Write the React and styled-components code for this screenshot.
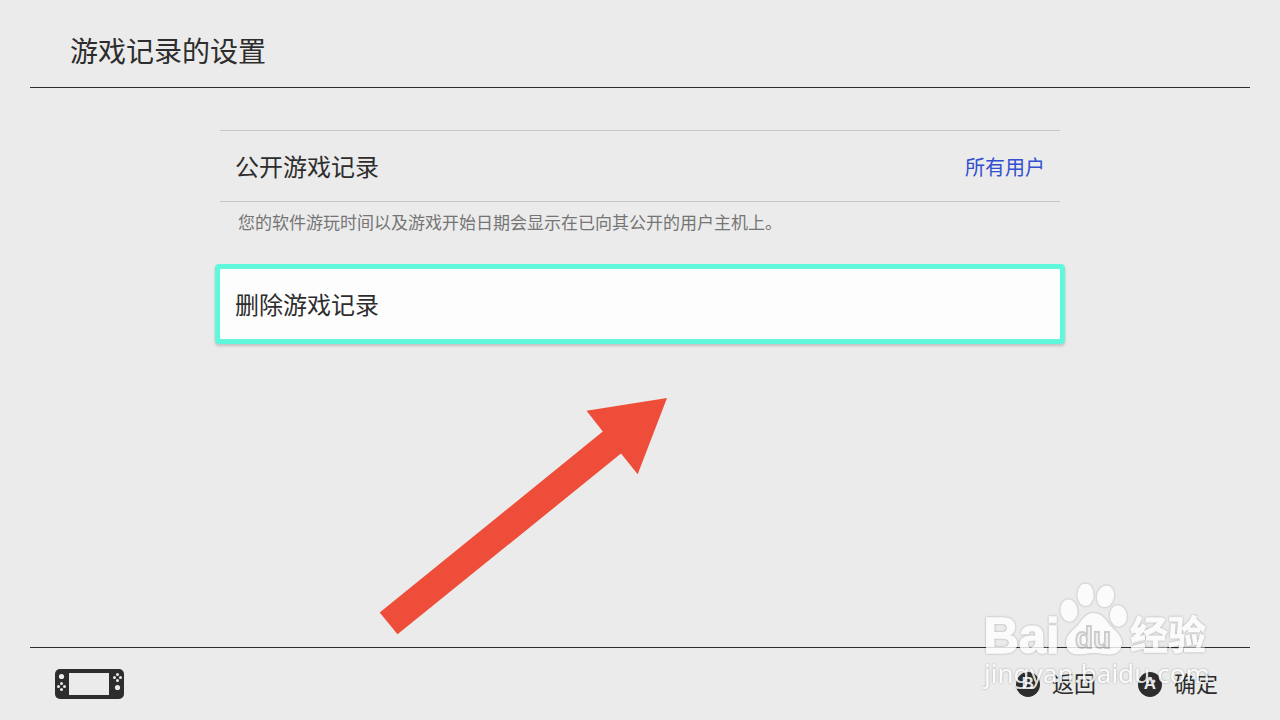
import React from 'react';
import styled, {createGlobalStyle} from 'styled-components';

const colours = {
  BACKGROUND: '#ebebeb',
  DARK: '#2d2d2d',
  LINE: '#c8c8c8',
  GRAY: '#757575',
  BLUE: '#3250d0',
  FOCUS: '#5ff8dc',
  ARROW: '#ee4e39',
};

const GlobalStyle = createGlobalStyle`
  * {
    box-sizing: border-box;
  }

  body {
    margin: 0;
    background-color: ${colours.BACKGROUND};
    font-family: "Noto Sans CJK SC", "Noto Sans", sans-serif;
    color: ${colours.DARK};
  }
`;

const Screen = styled.div`
  position: relative;
  display: flex;
  flex-direction: column;
  width: 1280px;
  height: 720px;
  padding: 0 30px;
  overflow: hidden;
`;

const Header = styled.header`
  display: flex;
  align-items: center;
  height: 88px;
  padding: 13px 40px 0;
  border-bottom: 1px solid ${colours.DARK};
`;

const Heading = styled.h1`
  margin: 0;
  font-size: 28px;
  font-weight: 400;
  line-height: 40px;
`;

const Content = styled.main`
  flex: 1;
  width: 840px;
  margin: 0 auto;
  padding-top: 42px;
`;

const Row = styled.div`
  display: flex;
  align-items: center;
  justify-content: space-between;
  height: 72px;
  padding: 0 15px;
  border-top: 1px solid ${colours.LINE};
  border-bottom: 1px solid ${colours.LINE};
  font-size: 24px;
  line-height: 36px;
`;

const FocusedRow = styled(Row)`
  height: 80px;
  margin: 0 -5px;
  border: 5px solid ${colours.FOCUS};
  border-radius: 4px;
  background: #fdfdfd;
  box-shadow: 0 2px 3px rgba(0, 0, 0, 0.18);
`;

const Value = styled.span`
  padding-top: 2px;
  font-size: 20px;
  color: ${colours.BLUE};
`;

const Description = styled.p`
  height: 62px;
  margin: 0;
  padding: 7px 18px 0;
  font-size: 17px;
  line-height: 26px;
  color: ${colours.GRAY};
`;

const Footer = styled.footer`
  display: flex;
  align-items: center;
  justify-content: space-between;
  height: 73px;
  padding: 0 32px 0 25px;
  border-top: 1px solid ${colours.DARK};
`;

const Hints = styled.div`
  display: flex;
  gap: 42px;
`;

const Hint = styled.div`
  display: flex;
  align-items: center;
  gap: 12px;
`;

const Label = styled.span`
  padding-bottom: 4px;
  font-size: 22px;
  line-height: 32px;
`;

const Key = styled.span`
  display: flex;
  align-items: center;
  justify-content: center;
  width: 24px;
  height: 25px;
  border-radius: 50%;
  background: ${colours.DARK};
  color: ${colours.BACKGROUND};
  font: bold 17px "Liberation Sans", sans-serif;
`;

// drawn over the page
const Arrow = styled.svg`
  position: absolute;
  left: 370px;
  top: 390px;
`;

const Watermark = styled.svg`
  position: absolute;
  left: 970px;
  top: 570px;
  fill: #fff;
  opacity: 0.82;
`;

const Glow = styled.g`
  filter: drop-shadow(0 0 1px rgba(0, 0, 0, 0.35));
`;

const pad = [[0, -3], [3, 0], [0, 3], [-3, 0]];

const Console = () => (
  <svg width='69' height='30' viewBox='0 0 69 30'>
    <rect width='69' height='30' rx='5' fill={colours.DARK}/>
    <rect x='14' y='4' width='40' height='22' fill={colours.BACKGROUND}/>
    <g fill={colours.BACKGROUND}>
      <circle cx='6.5' cy='7.5' r='2.6'/>
      <circle cx='62.5' cy='18.5' r='2.6'/>
      {pad.map(([x, y]) => (
        <React.Fragment key={`${x}${y}`}>
          <circle cx={6.5 + x} cy={17.5 + y} r='1.5'/>
          <circle cx={62.5 + x} cy={8.5 + y} r='1.5'/>
        </React.Fragment>
      ))}
    </g>
  </svg>
);

const Logo = () => (
  <Watermark width='260' height='140' viewBox='0 0 260 140'>
    <Glow>
      <text
        x='13.5'
        y='82.5'
        stroke='#fff'
        strokeWidth='1.4'
        fontFamily='Liberation Sans, sans-serif'
        fontWeight='700'
        fontSize='50'
        textLength='76'
        lengthAdjust='spacingAndGlyphs'
      >
        Bai
      </text>
      <ellipse cx='99' cy='40.5' rx='8.6' ry='11.2' transform='rotate(-8 99 40.5)'/>
      <ellipse cx='115.5' cy='24.7' rx='8.2' ry='11.3'/>
      <ellipse cx='135.5' cy='26.3' rx='8.6' ry='11' transform='rotate(12 135.5 26.3)'/>
      <ellipse cx='148.3' cy='46' rx='8.5' ry='10.8' transform='rotate(-8 148.3 46)'/>
      <path d='M123 43C116 43 112 50 108 55C103 60 96 65 96 73C96 80 101 84.5 108 84.5C114 84.5 118 83 124 83C130 83 134 85 141 84.5C148 84 152 79 152 73C152 65 144 60 139 54C135 48 131 43 123 43Z'/>
      <text
        x='160'
        y='79'
        fontFamily='Noto Sans CJK SC, sans-serif'
        fontWeight='700'
        fontSize='38.5'
        stroke='#fff'
        strokeWidth='0.8'
        textLength='76'
        lengthAdjust='spacingAndGlyphs'
      >
        经验
      </text>
    </Glow>
    <text
      x='105'
      y='77.5'
      fill='#f2f2f2'
      stroke='#c4c4c4'
      strokeWidth='1.8'
      fontFamily='Liberation Sans, sans-serif'
      fontWeight='700'
      fontSize='30'
      textLength='36'
      lengthAdjust='spacingAndGlyphs'
    >
      du
    </text>
    <Glow>
      <text
        x='14'
        y='113'
        fontFamily='Noto Sans, sans-serif'
        fontSize='25'
        textLength='226'
        lengthAdjust='spacingAndGlyphs'
      >
        jingyan.baidu.com
      </text>
    </Glow>
  </Watermark>
);

const App = () => {
  return (
    <Screen>
      <GlobalStyle/>
      <Header>
        <Heading>游戏记录的设置</Heading>
      </Header>
      <Content>
        <Row>
          <span>公开游戏记录</span>
          <Value>所有用户</Value>
        </Row>
        <Description>您的软件游玩时间以及游戏开始日期会显示在已向其公开的用户主机上。</Description>
        <FocusedRow>
          <span>删除游戏记录</span>
        </FocusedRow>
      </Content>
      <Footer>
        <Console/>
        <Hints>
          <Hint>
            <Key>B</Key>
            <Label>返回</Label>
          </Hint>
          <Hint>
            <Key>A</Key>
            <Label>确定</Label>
          </Hint>
        </Hints>
      </Footer>
      <Arrow width='310' height='250' viewBox='0 0 310 250'>
        <path d='M9.7 222.5L232.8 41.6L216.5 20.7L297 8L267.7 84.2L251 63.6L27.5 244.3Z' fill={colours.ARROW}/>
      </Arrow>
      <Logo/>
    </Screen>
  );
};

export default App;
